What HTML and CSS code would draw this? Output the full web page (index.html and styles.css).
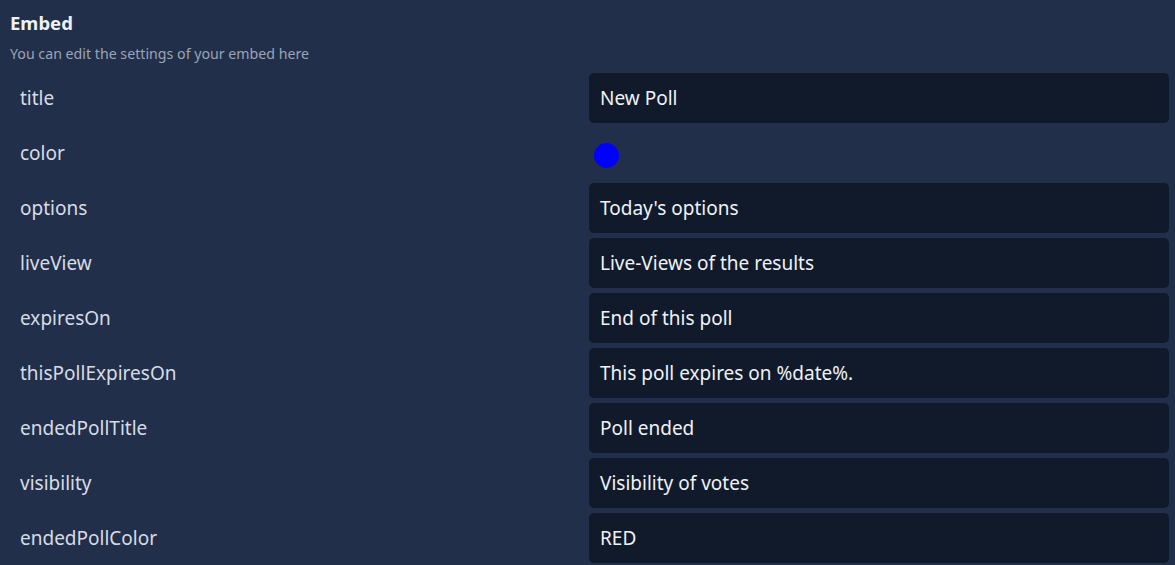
FILE: index.html
```html
<!DOCTYPE html>
<html>
<head>
<meta charset="utf-8">
<link rel="stylesheet" href="styles.css">
</head>
<body>
<div class="page">
  <h1 class="title">Embed</h1>
  <p class="subtitle">You can edit the settings of your embed here</p>
  <div class="rows">
    <div class="row"><span class="label">title</span><div class="field">New Poll</div></div>
    <div class="row"><span class="label">color</span><div class="swatch-wrap"><span class="swatch"></span></div></div>
    <div class="row"><span class="label">options</span><div class="field">Today's options</div></div>
    <div class="row"><span class="label">liveView</span><div class="field">Live-Views of the results</div></div>
    <div class="row"><span class="label">expiresOn</span><div class="field">End of this poll</div></div>
    <div class="row"><span class="label">thisPollExpiresOn</span><div class="field">This poll expires on %date%.</div></div>
    <div class="row"><span class="label">endedPollTitle</span><div class="field">Poll ended</div></div>
    <div class="row"><span class="label">visibility</span><div class="field">Visibility of votes</div></div>
    <div class="row"><span class="label">endedPollColor</span><div class="field">RED</div></div>
  </div>
</div>
</body>
</html>
```
FILE: styles.css
```css
html, body {
  margin: 0;
  padding: 0;
  background: #222f4a;
  font-family: "Noto Sans", "Open Sans", sans-serif;
}
.page {
  padding: 10px 6px 0 10px;
}
.title {
  margin: 0;
  font-size: 18.5px;
  font-weight: 700;
  line-height: 25px;
  color: #eef2f7;
}
.subtitle {
  margin: 9px 0 0 0;
  font-size: 14.2px;
  line-height: 20px;
  color: #9aa5b6;
}
.rows {
  margin-top: 9px;
  display: flex;
  flex-direction: column;
  gap: 5px;
}
.row {
  display: grid;
  grid-template-columns: 1fr 580px;
  height: 50px;
  align-items: center;
}
.label {
  padding-left: 10px;
  font-size: 19px;
  color: #d6dce6;
}
.field {
  height: 50px;
  box-sizing: border-box;
  background: #111a2b;
  border-radius: 5px;
  padding: 0 11px;
  display: flex;
  align-items: center;
  font-size: 19px;
  color: #eef2f7;
}
.swatch-wrap {
  padding-left: 5px;
  padding-top: 5px;
  display: flex;
  align-items: center;
}
.swatch {
  width: 25px;
  height: 25px;
  border-radius: 50%;
  background: #0000ff;
}
```
